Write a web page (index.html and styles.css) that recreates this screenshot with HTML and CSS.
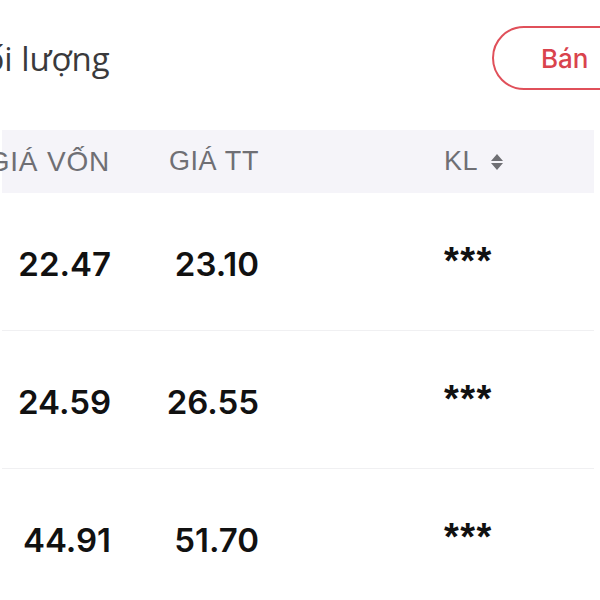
FILE: index.html
```html
<!DOCTYPE html>
<html lang="vi">
<head>
<meta charset="utf-8">
<link rel="stylesheet" href="styles.css">
</head>
<body>
<div class="page">
  <div class="topbar">
    <div class="title">Khối lượng</div>
    <button class="sell">Bán</button>
  </div>
  <div class="table">
    <div class="thead">
      <div class="c1">GIÁ VỐN</div>
      <div class="c2">GIÁ TT</div>
      <div class="c3">KL
        <svg class="sort" width="14" height="18" viewBox="0 0 14 18"><path d="M7 1 L13 8 H1 Z M7 17 L13 10 H1 Z" fill="#6f6f74"/></svg>
      </div>
    </div>
    <div class="row">
      <div class="c1">22.47</div>
      <div class="c2">23.10</div>
      <div class="c3 mask">***</div>
    </div>
    <div class="row">
      <div class="c1">24.59</div>
      <div class="c2">26.55</div>
      <div class="c3 mask">***</div>
    </div>
    <div class="row">
      <div class="c1">44.91</div>
      <div class="c2">51.70</div>
      <div class="c3 mask">***</div>
    </div>
  </div>
</div>
</body>
</html>
```
FILE: styles.css
```css
html, body {
  margin: 0;
  padding: 0;
  background: #ffffff;
}
.page {
  width: 600px;
  height: 600px;
  overflow: hidden;
  font-family: "Inter", "Liberation Sans", Arial, sans-serif;
}
.topbar {
  height: 130px;
  display: flex;
  align-items: center;
  justify-content: space-between;
  padding-bottom: 14px;
  box-sizing: border-box;
}
.title {
  font-family: "Open Sans", "Noto Sans", sans-serif;
  font-size: 33px;
  color: #3a3a3c;
  margin-left: -56px;
  white-space: nowrap;
}
.sell {
  width: 140px;
  height: 64px;
  margin-right: -32px;
  border: 2px solid #e0505a;
  border-radius: 32px;
  background: #fff;
  color: #d9434d;
  font-family: "Inter", "Liberation Sans", sans-serif;
  font-size: 26px;
  font-weight: 500;
  text-align: left;
  padding-left: 47px;
  box-sizing: border-box;
}
.table {
  margin-left: 2px;
  margin-right: 6px;
}
.thead, .row {
  display: grid;
  grid-template-columns: 109px 148px 1fr;
  align-items: center;
}
.thead {
  height: 63px;
  background: #f5f4f9;
  color: #6f6f74;
  font-family: "Liberation Sans", Arial, sans-serif;
  font-size: 27px;
  letter-spacing: 0.6px;
}
.thead .c1 {
  font-size: 28px;
  letter-spacing: 0.8px;
  margin-left: -16px;
  margin-right: 1px;
}
.row {
  height: 138px;
  border-bottom: 1px solid #f0f0f2;
  font-size: 33px;
  font-weight: 600;
  color: #111;
  padding-top: 4px;
  box-sizing: border-box;
}
.c1, .c2 {
  text-align: right;
  white-space: nowrap;
}
.c3 {
  padding-left: 185px;
  display: flex;
  align-items: center;
  gap: 12px;
}
.sort {
  display: block;
}
.mask {
  font-family: "Liberation Sans", Arial, sans-serif;
  font-weight: bold;
  font-size: 38px;
  letter-spacing: 1.5px;
  padding-bottom: 4px;
}
```
